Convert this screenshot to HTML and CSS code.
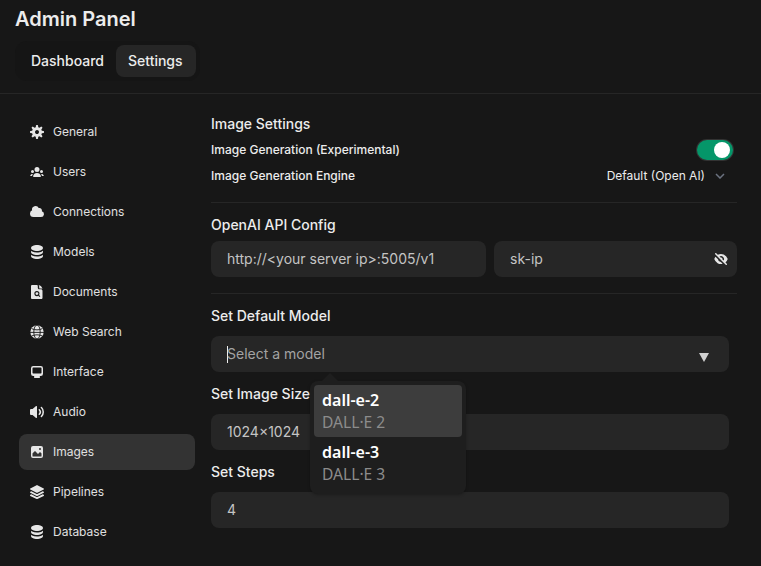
FILE: index.html
```html
<!DOCTYPE html>
<html lang="en">
<head>
<meta charset="utf-8">
<title>Admin Panel</title>
<link rel="stylesheet" href="styles.css">
</head>
<body>
<header class="header">
  <h1 class="title">Admin Panel</h1>
  <nav class="tabs">
    <a class="tab">Dashboard</a>
    <a class="tab tab-active">Settings</a>
  </nav>
</header>
<div class="layout">
  <nav class="sidebar">
    <a class="item"><svg class="icon" viewBox="0 0 16 16"><path fill-rule="evenodd" d="M6.955 1.45A.5.5 0 0 1 7.452 1h1.096a.5.5 0 0 1 .497.45l.17 1.699c.484.12.94.312 1.356.562l1.321-1.081a.5.5 0 0 1 .67.033l.774.775a.5.5 0 0 1 .034.67l-1.08 1.32c.25.417.44.873.561 1.357l1.699.17a.5.5 0 0 1 .45.497v1.096a.5.5 0 0 1-.45.497l-1.699.17c-.12.484-.312.94-.562 1.356l1.082 1.322a.5.5 0 0 1-.034.67l-.774.774a.5.5 0 0 1-.67.033l-1.322-1.08c-.416.25-.872.44-1.356.561l-.17 1.699a.5.5 0 0 1-.497.45H7.452a.5.5 0 0 1-.497-.45l-.17-1.699a4.973 4.973 0 0 1-1.356-.562L4.108 13.37a.5.5 0 0 1-.67-.033l-.774-.775a.5.5 0 0 1-.034-.67l1.08-1.32a4.971 4.971 0 0 1-.561-1.357l-1.699-.17A.5.5 0 0 1 1 8.548V7.452a.5.5 0 0 1 .45-.497l1.699-.17c.12-.484.312-.94.562-1.356L2.629 4.107a.5.5 0 0 1 .034-.67l.774-.774a.5.5 0 0 1 .67-.033L5.43 3.71a4.97 4.97 0 0 1 1.356-.561l.17-1.699ZM6 8c0 .538.212 1.026.558 1.385l.057.057a2 2 0 0 0 2.828-2.828l-.058-.056A2 2 0 0 0 6 8Z"/></svg>General</a>
    <a class="item"><svg class="icon" viewBox="0 0 16 16"><path d="M8 8a2.5 2.5 0 1 0 0-5 2.5 2.5 0 0 0 0 5ZM3.156 11.763c.16-.629.44-1.21.813-1.72a2.5 2.5 0 0 0-2.725 1.377c-.136.287.102.58.418.58h1.449c.01-.077.025-.156.045-.237ZM12.847 11.763c.02.08.036.16.046.237h1.446c.316 0 .554-.293.417-.579a2.5 2.5 0 0 0-2.722-1.378c.374.51.653 1.09.813 1.72ZM14 7.5a1.5 1.5 0 1 1-3 0 1.5 1.5 0 0 1 3 0ZM3.5 9a1.5 1.5 0 1 0 0-3 1.5 1.5 0 0 0 0 3ZM5 13c-.552 0-1.013-.455-.876-.99a4.002 4.002 0 0 1 7.753 0c.136.535-.324.99-.877.99H5Z"/></svg>Users</a>
    <a class="item"><svg class="icon" viewBox="0 0 16 16"><path d="M1 9.5A3.5 3.5 0 0 0 4.5 13H12a3 3 0 0 0 .917-5.857 2.503 2.503 0 0 0-3.198-3.019 3.5 3.5 0 0 0-6.628 2.171A3.5 3.5 0 0 0 1 9.5Z"/></svg>Connections</a>
    <a class="item"><svg class="icon" viewBox="0 0 16 16"><path d="M8 7c3.314 0 6-1.343 6-3s-2.686-3-6-3-6 1.343-6 3 2.686 3 6 3Z"/><path d="M8 8.5c1.84 0 3.579-.37 4.914-1.037A6.33 6.33 0 0 0 14 6.78V8c0 1.657-2.686 3-6 3S2 9.657 2 8V6.78c.346.273.72.5 1.087.683C4.42 8.131 6.16 8.5 8 8.5Z"/><path d="M8 12.5c1.84 0 3.579-.37 4.914-1.037.366-.183.74-.41 1.086-.684V12c0 1.657-2.686 3-6 3s-6-1.343-6-3v-1.22c.346.273.72.5 1.087.683C4.42 12.131 6.16 12.5 8 12.5Z"/></svg>Models</a>
    <a class="item"><svg class="icon" viewBox="0 0 16 16"><path d="M3.3 1h4.4c.7 0 1.1.4 1.1 1.1v1.6c0 .9.6 1.5 1.5 1.5h1.6c.8 0 1.6.6 1.6 1.5v7c0 .8-.5 1.3-1.3 1.3H3.3C2.5 15 2 14.5 2 13.7V2.3C2 1.5 2.5 1 3.3 1Z"/><path d="M9.6 1.1c2 .5 3.3 1.9 3.9 3.7-.5-.3-1-.4-1.6-.4h-1.3c-.2 0-.4-.2-.4-.4V2.7c0-.6-.2-1.1-.6-1.6Z"/><circle class="cut" cx="7.9" cy="9.6" r="2"/><path class="cut" d="m9.4 11.1 1.5 1.5"/></svg>Documents</a>
    <a class="item"><svg class="icon" viewBox="0 0 16 16"><circle cx="8" cy="8" r="6.7"/><g class="cut grid-lines"><ellipse cx="8" cy="8" rx="3.2" ry="7"/><path d="M1 8.4h14M2.6 4.6c3.3 1.7 7.5 1.7 10.8 0M2.6 12c3.3-1.6 7.5-1.6 10.8 0"/></g></svg>Web Search</a>
    <a class="item"><svg class="icon" viewBox="0 0 16 16"><path fill-rule="evenodd" d="M2 4.25A2.25 2.25 0 0 1 4.25 2h7.5A2.25 2.25 0 0 1 14 4.25v5.5A2.25 2.25 0 0 1 11.75 12h-1.312c.1.128.21.248.328.36a.75.75 0 0 1 .234.545v.345a.75.75 0 0 1-.75.75h-4.5a.75.75 0 0 1-.75-.75v-.345a.75.75 0 0 1 .234-.545c.118-.111.228-.232.328-.36H4.25A2.25 2.25 0 0 1 2 9.75v-5.5Zm2.25-.75a.75.75 0 0 0-.75.75v4.5c0 .414.336.75.75.75h7.5a.75.75 0 0 0 .75-.75v-4.5a.75.75 0 0 0-.75-.75h-7.5Z"/></svg>Interface</a>
    <a class="item"><svg class="icon" viewBox="0 0 16 16"><path d="M7.557 2.066A.75.75 0 0 1 8 2.75v10.5a.75.75 0 0 1-1.248.56L3.59 11H2a1 1 0 0 1-1-1V6a1 1 0 0 1 1-1h1.59l3.162-2.81a.75.75 0 0 1 .805-.124ZM12.95 3.05a.75.75 0 1 0-1.06 1.06 5.5 5.5 0 0 1 0 7.78.75.75 0 1 0 1.06 1.06 7 7 0 0 0 0-9.9Z"/><path d="M10.828 5.172a.75.75 0 1 0-1.06 1.06 2.5 2.5 0 0 1 0 3.536.75.75 0 1 0 1.06 1.06 4 4 0 0 0 0-5.656Z"/></svg>Audio</a>
    <a class="item item-active"><svg class="icon" viewBox="0 0 16 16"><path fill-rule="evenodd" d="M2 4a2 2 0 0 1 2-2h8a2 2 0 0 1 2 2v8a2 2 0 0 1-2 2H4a2 2 0 0 1-2-2V4Zm10.5 5.707a.5.5 0 0 0-.146-.353l-1-1a.5.5 0 0 0-.708 0L9.354 9.646a.5.5 0 0 1-.708 0L6.354 7.354a.5.5 0 0 0-.708 0l-2 2a.5.5 0 0 0-.146.353V12a.5.5 0 0 0 .5.5h8a.5.5 0 0 0 .5-.5V9.707ZM12 5a1 1 0 1 1-2 0 1 1 0 0 1 2 0Z"/></svg>Images</a>
    <a class="item"><svg class="icon" viewBox="0 0 16 16"><path d="M7.6 1.2a.9.9 0 0 1 .8 0l6.3 3.2a.6.6 0 0 1 0 1.1L8.4 8.7a.9.9 0 0 1-.8 0L1.3 5.5a.6.6 0 0 1 0-1.1Z"/><path d="m2.3 7.2 4.8 2.5c.6.3 1.2.3 1.8 0l4.8-2.5 1 .5a.6.6 0 0 1 0 1.1L8.4 11.9a.9.9 0 0 1-.8 0L1.3 8.8a.6.6 0 0 1 0-1.1Z"/><path d="m2.3 10.3 4.8 2.5c.6.3 1.2.3 1.8 0l4.8-2.5 1 .5a.6.6 0 0 1 0 1.1L8.4 15a.9.9 0 0 1-.8 0l-6.3-3.1a.6.6 0 0 1 0-1.1Z"/></svg>Pipelines</a>
    <a class="item"><svg class="icon" viewBox="0 0 16 16"><path d="M8 7c3.314 0 6-1.343 6-3s-2.686-3-6-3-6 1.343-6 3 2.686 3 6 3Z"/><path d="M8 8.5c1.84 0 3.579-.37 4.914-1.037A6.33 6.33 0 0 0 14 6.78V8c0 1.657-2.686 3-6 3S2 9.657 2 8V6.78c.346.273.72.5 1.087.683C4.42 8.131 6.16 8.5 8 8.5Z"/><path d="M8 12.5c1.84 0 3.579-.37 4.914-1.037.366-.183.74-.41 1.086-.684V12c0 1.657-2.686 3-6 3s-6-1.343-6-3v-1.22c.346.273.72.5 1.087.683C4.42 12.131 6.16 12.5 8 12.5Z"/></svg>Database</a>
  </nav>
  <main class="content">
    <section class="general">
      <h2 class="heading">Image Settings</h2>
      <div class="row"><span>Image Generation (Experimental)</span><span class="switch"><span class="knob"></span></span></div>
      <div class="row"><span>Image Generation Engine</span><span class="engine">Default (Open AI)<svg class="chevron" viewBox="0 0 10 6"><path d="m1 1 4 4 4-4"/></svg></span></div>
    </section>
    <section class="api">
      <h2 class="heading">OpenAI API Config</h2>
      <div class="fields">
        <div class="field url">http://&lt;your server ip&gt;:5005/v1</div>
        <div class="field key">sk-ip<svg class="icon" viewBox="0 0 16 16"><path fill-rule="evenodd" d="M3.28 2.22a.75.75 0 0 0-1.06 1.06l10.5 10.5a.75.75 0 1 0 1.06-1.06l-1.322-1.323a7.012 7.012 0 0 0 2.16-3.11.87.87 0 0 0 0-.567A7.003 7.003 0 0 0 4.82 3.76L3.28 2.22Zm3.196 3.195 1.135 1.136A1.502 1.502 0 0 1 9.45 8.389l1.136 1.135a3 3 0 0 0-4.109-4.109Z"/><path d="m7.812 10.994 1.816 1.816A7.003 7.003 0 0 1 1.38 8.28a.87.87 0 0 1 0-.566 6.985 6.985 0 0 1 1.113-2.039l2.513 2.513a3 3 0 0 0 2.806 2.806Z"/></svg></div>
      </div>
    </section>
    <section class="options">
      <div class="group">
        <h2 class="heading">Set Default Model</h2>
        <div class="field select"><span class="caret"></span><span class="placeholder">Select a model</span><svg class="arrow" viewBox="0 0 10 9"><path d="M0 0h10L5 9Z"/></svg>
          <div class="menu">
            <div class="choice choice-active"><b>dall-e-2</b><span>DALL·E 2</span></div>
            <div class="choice"><b>dall-e-3</b><span>DALL·E 3</span></div>
          </div>
        </div>
      </div>
      <div class="group">
        <h2 class="heading">Set Image Size</h2>
        <div class="field">1024×1024</div>
      </div>
      <div class="group">
        <h2 class="heading">Set Steps</h2>
        <div class="field">4</div>
      </div>
    </section>
  </main>
</div>
</body>
</html>
```
FILE: styles.css
```css
* { box-sizing: border-box; }
body {
  margin: 0;
  height: 566px;
  overflow: hidden;
  background: #171717;
  color: #ececec;
  font: 500 14px/20px Inter, sans-serif;
}
h1, h2 { margin: 0; }
.header {
  height: 94px;
  padding: 5px 15px 0;
  border-bottom: 1px solid #262626;
}
.title { font-size: 20px; font-weight: 600; line-height: 28px; }
.tabs {
  display: flex;
  width: 185px;
  height: 40px;
  margin-top: 8px;
  padding: 4px;
  border-radius: 12px;
  background: #151515;
}
.tab { padding: 6px 12px; border-radius: 8px; }
.tab-active { flex: 1; background: #262626; }
.layout { display: flex; gap: 16px; padding: 20px 24px 0 19px; }
.sidebar { display: flex; flex-direction: column; gap: 4px; width: 176px; flex: none; }
.item {
  display: flex;
  align-items: center;
  gap: 8px;
  height: 36px;
  padding: 0 10px;
  border-radius: 8px;
  color: #e0e0e0;
  font-size: 12px;
  font-weight: 400;
}
.item-active { background: #333; }
.icon { width: 16px; height: 16px; fill: #e6e6e6; }
.icon .cut { fill: none; stroke: #171717; stroke-width: 1.1; }
.icon .grid-lines { stroke-width: 0.9; }
.content { flex: 1; }
.heading { font-size: 14px; font-weight: 500; line-height: 20px; }
.general { height: 89px; border-bottom: 1px solid #262626; }
.row {
  display: flex;
  align-items: center;
  justify-content: space-between;
  height: 26px;
  font-size: 12px;
}
.general .heading + .row { margin-top: 3px; }
.switch {
  display: flex;
  justify-content: flex-end;
  align-items: center;
  width: 36px;
  height: 20px;
  margin-right: 4px;
  padding: 2px 3px;
  border-radius: 10px;
  background: #059669;
  box-shadow: 0 0 0 1px #333;
}
.knob { width: 16px; height: 16px; border-radius: 50%; background: #fff; }
.engine { display: flex; align-items: center; gap: 10px; padding-right: 12px; font-weight: 400; }
.chevron { width: 10px; height: 6px; fill: none; stroke: #6b7280; stroke-width: 1.5; }
.api { height: 91px; padding-top: 12px; border-bottom: 1px solid #262626; }
.fields { display: flex; gap: 8px; margin-top: 6px; }
.field {
  display: flex;
  align-items: center;
  height: 36px;
  padding: 0 16px;
  border-radius: 8px;
  background: #262626;
  color: #c4c4c4;
  font-weight: 400;
}
.url { width: 275px; }
.key { flex: 1; justify-content: space-between; padding-right: 8px; }
.options { display: flex; flex-direction: column; gap: 12px; padding: 12px 8px 0 0; }
.group .field { margin-top: 10px; }
.select { position: relative; }
.caret { width: 1px; height: 17px; margin-right: -1px; background: #eee; }
.placeholder { flex: 1; color: #a3a3a3; }
.arrow { width: 10px; height: 9px; margin: 6px 4.5px 0 0; fill: #d0d0d0; }
.menu {
  position: absolute;
  z-index: 1;
  left: 99px;
  top: 45px;
  width: 156px;
  height: 113px;
  padding: 4px;
  border-radius: 8px;
  background: #1e1e1e;
  box-shadow: 0 1px 3px #0004;
}
.menu::before {
  content: "";
  position: absolute;
  left: 12px;
  top: -8px;
  border: 8px solid transparent;
  border-top: 0;
  border-bottom-color: #1e1e1e;
}
.choice {
  display: flex;
  flex-direction: column;
  height: 52px;
  padding: 4px 8px;
  border-radius: 4px;
  color: #8c8c8c;
  font: 400 15.6px/22px "Noto Sans", sans-serif;
}
.choice b { color: #fff; font-size: 16px; font-weight: 600; }
.choice-active { background: #3d3d3d; }
```
